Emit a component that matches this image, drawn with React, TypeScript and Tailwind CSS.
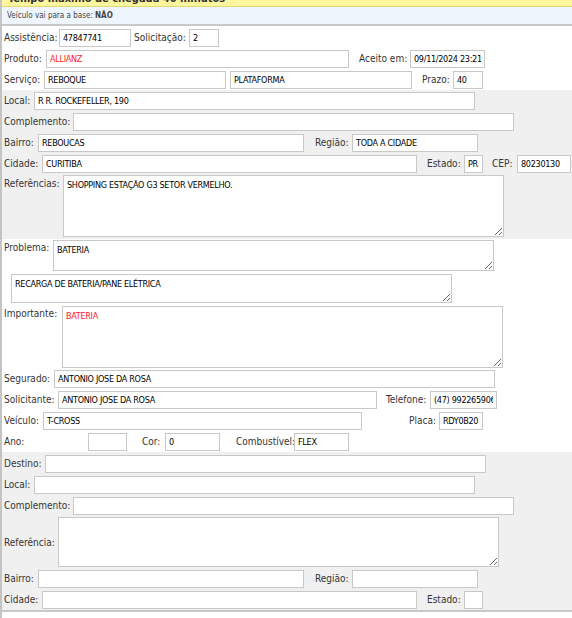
import React from 'react';

const LABEL = 'shrink-0 whitespace-nowrap text-[10px] leading-[13px] text-[#353535]';
const FIELD_FONT: React.CSSProperties = {
  fontFamily: '"DejaVu Sans Condensed", "Liberation Sans", Arial, sans-serif',
  fontStretch: 'condensed',
};

type FieldProps = { w: string; value?: string; red?: boolean; className?: string };

function Field({ w, value = '', red, className = '' }: FieldProps) {
  return (
    <input
      readOnly
      value={value}
      style={FIELD_FONT}
      className={`${w} ${className} h-[18px] shrink-0 border border-[#c8c8c8] bg-white px-[3px] text-[9px] tracking-[-0.3px] outline-none ${red ? 'text-[#ff1a1a]' : 'text-black'}`}
    />
  );
}

function Area({ w, h, value = '', red, className = '' }: FieldProps & { h: string }) {
  return (
    <textarea
      readOnly
      value={value}
      style={FIELD_FONT}
      className={`${w} ${h} ${className} shrink-0 border border-[#c8c8c8] bg-white px-[3px] pt-[3px] text-[9px] leading-[13px] tracking-[-0.3px] outline-none ${red ? 'text-[#ff1a1a]' : 'text-black'}`}
    />
  );
}

function Row({ children }: { children: React.ReactNode }) {
  return <div className="flex h-[21px] items-center pl-[2px]">{children}</div>;
}

export default function App() {
  return (
    <div
      className="w-[572px] h-[618px] overflow-hidden border-l-2 border-[#c4c4c4] bg-white"
      style={{ fontFamily: '"DejaVu Sans Condensed", "Liberation Sans", Arial, sans-serif', fontStretch: 'condensed' }}
    >
      {/* aviso de tempo */}
      <div className="h-[7px] overflow-hidden border-b border-[#e2d777] bg-[#fdf69d]">
        <div className="-mt-[8px] pl-[6px] text-[11px] font-bold leading-[13px] text-[#333]">
          Tempo máximo de chegada 40 minutos
        </div>
      </div>
      <div className="flex h-[19px] items-center border-b-2 border-[#c8c8c8] bg-[#eef5fd] pl-[5px] text-[8px] text-[#444]">
        Veículo vai para a base:&nbsp;<span className="font-bold">NÃO</span>
      </div>

      {/* dados do atendimento */}
      <div className="pt-[1px]">
        <Row>
          <span className={`${LABEL} w-[55px]`}>Assistência:</span>
          <Field w="w-[72px]" value="47847741" />
          <span className={`${LABEL} ml-[3px] w-[55px]`}>Solicitação:</span>
          <Field w="w-[30px]" value="2" />
        </Row>
        <Row>
          <span className={`${LABEL} w-[42px]`}>Produto:</span>
          <Field w="w-[303px]" value="ALLIANZ" red />
          <span className={`${LABEL} ml-[10px] w-[51px]`}>Aceito em:</span>
          <Field w="w-[75px]" value="09/11/2024 23:21" />
        </Row>
        <Row>
          <span className={`${LABEL} w-[40px]`}>Serviço:</span>
          <Field w="w-[182px]" value="REBOQUE" />
          <Field w="w-[182px]" value="PLATAFORMA" className="ml-[4px]" />
          <span className={`${LABEL} ml-[10px] w-[31px]`}>Prazo:</span>
          <Field w="w-[30px]" value="40" />
        </Row>
      </div>

      {/* origem */}
      <div className="bg-[#f0f0f0] pb-[2px]">
        <Row>
          <span className={`${LABEL} w-[30px]`}>Local:</span>
          <Field w="w-[441px]" value="R R. ROCKEFELLER, 190" />
        </Row>
        <Row>
          <span className={`${LABEL} w-[69px]`}>Complemento:</span>
          <Field w="w-[441px]" />
        </Row>
        <Row>
          <span className={`${LABEL} w-[34px]`}>Bairro:</span>
          <Field w="w-[266px]" value="REBOUCAS" />
          <span className={`${LABEL} ml-[11px] w-[37px]`}>Região:</span>
          <Field w="w-[126px]" value="TODA A CIDADE" />
        </Row>
        <Row>
          <span className={`${LABEL} w-[38px]`}>Cidade:</span>
          <Field w="w-[375px]" value="CURITIBA" />
          <span className={`${LABEL} ml-[10px] w-[37px]`}>Estado:</span>
          <Field w="w-[19px]" value="PR" />
          <span className={`${LABEL} ml-[9px] w-[25px]`}>CEP:</span>
          <Field w="w-[54px]" value="80230130" />
        </Row>
        <div className="mt-[1px] flex items-start pl-[2px]">
          <span className={`${LABEL} w-[59px] pt-[2px]`}>Referências:</span>
          <Area w="w-[441px]" h="h-[62px]" value="SHOPPING ESTAÇÃO G3 SETOR VERMELHO." />
        </div>
      </div>

      {/* problema e veículo */}
      <div className="pt-[1px]">
        <div className="flex items-start pl-[2px]">
          <span className={`${LABEL} w-[49px] pt-[1px]`}>Problema:</span>
          <Area w="w-[441px]" h="h-[31px]" value="BATERIA" />
        </div>
        <div className="mt-[3px] flex pl-[2px]">
          <Area w="w-[441px]" h="h-[29px]" value="RECARGA DE BATERIA/PANE ELÉTRICA" className="ml-[7px]" />
        </div>
        <div className="mt-[3px] flex items-start pl-[2px]">
          <span className={`${LABEL} w-[58px] pt-[1px]`}>Importante:</span>
          <Area w="w-[441px]" h="h-[62px]" value="BATERIA" red />
        </div>
        <Row>
          <span className={`${LABEL} w-[50px]`}>Segurado:</span>
          <Field w="w-[441px]" value="ANTONIO JOSE DA ROSA" />
        </Row>
        <Row>
          <span className={`${LABEL} w-[54px]`}>Solicitante:</span>
          <Field w="w-[319px]" value="ANTONIO JOSE DA ROSA" />
          <span className={`${LABEL} ml-[9px] w-[44px]`}>Telefone:</span>
          <Field w="w-[67px]" value="(47) 992265906" />
        </Row>
        <Row>
          <span className={`${LABEL} w-[39px]`}>Veículo:</span>
          <Field w="w-[319px]" value="T-CROSS" />
          <span className={`${LABEL} ml-[47px] w-[30px]`}>Placa:</span>
          <Field w="w-[44px]" value="RDY0B20" />
        </Row>
        <Row>
          <span className={`${LABEL} w-[84px]`}>Ano:</span>
          <Field w="w-[39px]" />
          <span className={`${LABEL} ml-[15px] w-[23px]`}>Cor:</span>
          <Field w="w-[55px]" value="0" />
          <span className={`${LABEL} ml-[16px] w-[58px]`}>Combustível:</span>
          <Field w="w-[55px]" value="FLEX" />
        </Row>
      </div>

      {/* destino */}
      <div className="border-b-2 border-[#c8c8c8] bg-[#f0f0f0] pt-[1px]">
        <Row>
          <span className={`${LABEL} w-[41px]`}>Destino:</span>
          <Field w="w-[441px]" />
        </Row>
        <Row>
          <span className={`${LABEL} w-[30px]`}>Local:</span>
          <Field w="w-[441px]" />
        </Row>
        <Row>
          <span className={`${LABEL} w-[69px]`}>Complemento:</span>
          <Field w="w-[441px]" />
        </Row>
        <div className="mt-[1px] flex items-center pl-[2px]">
          <span className={`${LABEL} w-[54px]`}>Referência:</span>
          <Area w="w-[441px]" h="h-[50px]" />
        </div>
        <div className="mt-[1px]">
          <Row>
            <span className={`${LABEL} w-[34px]`}>Bairro:</span>
            <Field w="w-[266px]" />
            <span className={`${LABEL} ml-[11px] w-[37px]`}>Região:</span>
            <Field w="w-[126px]" />
          </Row>
          <Row>
            <span className={`${LABEL} w-[38px]`}>Cidade:</span>
            <Field w="w-[375px]" />
            <span className={`${LABEL} ml-[10px] w-[37px]`}>Estado:</span>
            <Field w="w-[19px]" />
          </Row>
        </div>
      </div>
    </div>
  );
}
